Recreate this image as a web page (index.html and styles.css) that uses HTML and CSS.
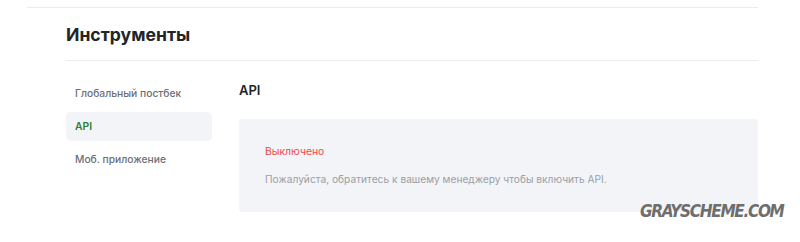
FILE: index.html
```html
<!DOCTYPE html>
<html lang="ru">
<head>
<meta charset="utf-8">
<link rel="stylesheet" href="styles.css">
</head>
<body>
<div class="page">
  <div class="panel">
    <h1 class="title">Инструменты</h1>
    <div class="layout">
      <nav class="side">
        <a class="item">Глобальный постбек</a>
        <a class="item active">API</a>
        <a class="item">Моб. приложение</a>
      </nav>
      <section class="content">
        <h2 class="subtitle">API</h2>
        <div class="card">
          <div class="status">Выключено</div>
          <p class="note">Пожалуйста, обратитесь к вашему менеджеру чтобы включить API.</p>
        </div>
      </section>
    </div>
  </div>
</div>
<div class="watermark">GRAYSCHEME.COM</div>
</body>
</html>
```
FILE: styles.css
```css
html, body {
  margin: 0;
  padding: 0;
  background: #fff;
  font-family: Inter, "Noto Sans", sans-serif;
  overflow: hidden;
}
.page {
  margin: 7px 42px 0 27px;
  border-top: 1px solid #ececee;
  height: 235px;
}
.panel {
  padding-left: 39px;
}
.title {
  margin: 0;
  height: 53px;
  box-sizing: border-box;
  padding-top: 16px;
  font-size: 17.6px;
  font-weight: 700;
  color: #222428;
  border-bottom: 1px solid #ececee;
  line-height: 22px;
}
.layout {
  display: flex;
  gap: 27px;
  padding-top: 18px;
}
.side {
  width: 146px;
  display: flex;
  flex-direction: column;
  gap: 4px;
}
.item {
  display: block;
  height: 29px;
  line-height: 29px;
  padding-left: 9px;
  font-size: 10.3px;
  font-weight: 500;
  color: #6b6f78;
  border-radius: 5px;
}
.active {
  background: #f3f4f7;
  color: #2f7d32;
  font-weight: 600;
}
.content {
  flex: 1;
}
.subtitle {
  margin: 0;
  padding-top: 3px;
  font-size: 13px;
  font-weight: 600;
  color: #222428;
  line-height: 16px;
}
.card {
  margin-top: 21px;
  height: 93px;
  box-sizing: border-box;
  background: #f3f4f7;
  border-radius: 4px;
  padding: 26px 26px 0;
}
.status {
  font-size: 10.4px;
  color: #f04848;
  line-height: 14px;
}
.note {
  margin: 13px 0 0;
  font-size: 10.2px;
  color: #9a9ea6;
  line-height: 14px;
}
.watermark {
  position: absolute;
  left: 640px;
  top: 201px;
  font-family: "DejaVu Sans Condensed", "DejaVu Sans", sans-serif;
  font-style: italic;
  font-weight: 700;
  font-size: 17px;
  letter-spacing: -1.3px;
  color: #6e6e6e;
}
```
